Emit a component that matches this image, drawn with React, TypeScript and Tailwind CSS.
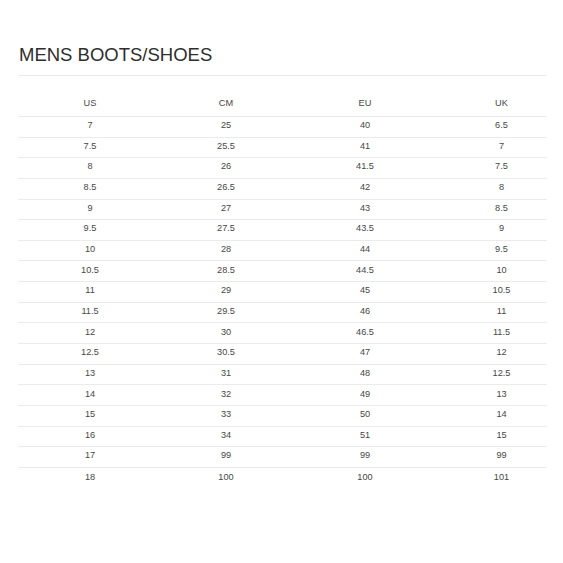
const rows: [string, string, string, string][] = [
  ['7', '25', '40', '6.5'],
  ['7.5', '25.5', '41', '7'],
  ['8', '26', '41.5', '7.5'],
  ['8.5', '26.5', '42', '8'],
  ['9', '27', '43', '8.5'],
  ['9.5', '27.5', '43.5', '9'],
  ['10', '28', '44', '9.5'],
  ['10.5', '28.5', '44.5', '10'],
  ['11', '29', '45', '10.5'],
  ['11.5', '29.5', '46', '11'],
  ['12', '30', '46.5', '11.5'],
  ['12.5', '30.5', '47', '12'],
  ['13', '31', '48', '12.5'],
  ['14', '32', '49', '13'],
  ['15', '33', '50', '14'],
  ['16', '34', '51', '15'],
  ['17', '99', '99', '99'],
  ['18', '100', '100', '101'],
];

const cols = 'grid grid-cols-[144px_128px_150px_107px]';

function Cells({ values }: { values: string[] }) {
  return (
    <>
      <span className="text-center">{values[0]}</span>
      <span className="text-center">{values[1]}</span>
      <span className="text-center">{values[2]}</span>
      <span className="pl-4 text-center">{values[3]}</span>
    </>
  );
}

export default function App() {
  return (
    <div className="min-h-[563px] bg-white font-['Liberation_Sans',Arial,sans-serif]">
      <div className="ml-[18px] w-[529px] pt-[45.6px]">
        <h1 className="border-b border-[#ebebeb] pb-[10.9px] pl-[1px] text-[18.5px] font-normal leading-none text-[#2e2e2e]">
          MENS BOOTS/SHOES
        </h1>

        <div className="mt-[18.7px] text-[9.2px] leading-none text-[#474747]">
          <div className={`${cols} h-[22.3px] items-center border-b border-[#ebebeb] pb-[2.5px]`}>
            <Cells values={['US', 'CM', 'EU', 'UK']} />
          </div>
          {rows.map((r, i) => (
            <div
              key={r[0]}
              className={`${cols} h-[20.65px] items-center pb-[2px] ${
                i < rows.length - 1 ? 'border-b border-[#ebebeb]' : ''
              }`}
            >
              <Cells values={r} />
            </div>
          ))}
        </div>
      </div>
    </div>
  );
}
